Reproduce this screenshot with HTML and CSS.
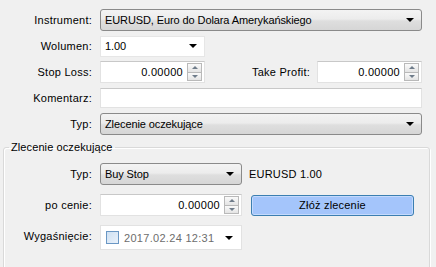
FILE: index.html
```html
<!DOCTYPE html>
<html lang="pl">
	<head>
		<meta charset="UTF-8" />
		<title>Zlecenie</title>
		<link rel="stylesheet" href="styles.css">
	</head>
	<body>
		<div class="order">
			<div class="grid">
				<span class="lbl">Instrument:</span>
				<div class="combo combo-btn">EURUSD, Euro do Dolara Amerykańskiego<span class="arrow"></span></div>

				<span class="lbl">Wolumen:</span>
				<div class="cell"><div class="combo combo-edit short">1.00<span class="arrow"></span></div></div>

				<span class="lbl">Stop Loss:</span>
				<div class="cell">
					<div class="spin short"><span class="val">0.00000</span><span class="spinner"><i class="up"></i><i class="down"></i></span></div>
					<span class="lbl tp-lbl">Take Profit:</span>
					<div class="spin tp"><span class="val">0.00000</span><span class="spinner"><i class="up"></i><i class="down"></i></span></div>
				</div>

				<span class="lbl">Komentarz:</span>
				<div class="cell"><div class="field"></div></div>

				<span class="lbl">Typ:</span>
				<div class="combo combo-btn">Zlecenie oczekujące<span class="arrow"></span></div>
			</div>

			<fieldset class="group">
				<legend>Zlecenie oczekujące</legend>
				<div class="grid inner">
					<span class="lbl">Typ:</span>
					<div class="cell">
						<div class="combo combo-btn mid">Buy Stop<span class="arrow"></span></div>
						<span class="info">EURUSD 1.00</span>
					</div>

					<span class="lbl">po cenie:</span>
					<div class="cell">
						<div class="spin mid"><span class="val">0.00000</span><span class="spinner"><i class="up"></i><i class="down"></i></span></div>
						<button class="place">Złóż zlecenie</button>
					</div>

					<span class="lbl">Wygaśnięcie:</span>
					<div class="cell">
						<div class="date mid">
							<span class="check"></span>
							<span class="date-val">2017.02.24 12:31</span>
							<span class="arrow"></span>
						</div>
					</div>
				</div>
			</fieldset>
		</div>
	</body>
</html>
```

FILE: styles.css
```css
body {
	margin: 0;
	background-color: #f0f0f0;
	font-family: "Liberation Sans", Arial, sans-serif;
	font-size: 11px;
	color: #000;
	overflow: hidden;
}

.order {
	padding-top: 9px;
	width: 436px;
	height: 267px;
	box-sizing: border-box;
	overflow: hidden;
}

.grid {
	display: grid;
	grid-template-columns: 92px 322px;
	grid-auto-rows: 22px;
	column-gap: 8px;
	row-gap: 4px;
}

.lbl {
	text-align: right;
	align-self: center;
	white-space: nowrap;
	letter-spacing: 0.25px;
}

.cell {
	display: flex;
	align-items: center;
}

.combo {
	position: relative;
	display: flex;
	align-items: center;
	box-sizing: border-box;
	height: 22px;
	padding-left: 4px;
	letter-spacing: -0.1px;
}

.combo-btn {
	border: 1px solid #8a8a8a;
	border-radius: 3px;
	background: linear-gradient(#f3f3f3, #ececec 45%, #dedede 55%, #d6d6d6);
}

.combo-edit {
	height: 21px;
	background-color: #fff;
	border: 1px solid #e6e6e6;
}

.arrow {
	position: absolute;
	right: 7px;
	top: 50%;
	margin-top: -2px;
	width: 0;
	height: 0;
	border-left: 4px solid transparent;
	border-right: 4px solid transparent;
	border-top: 4px solid #000;
}

.short {
	width: 105px;
}

.mid {
	width: 142px;
}

.spin {
	display: flex;
	align-items: center;
	box-sizing: border-box;
	height: 22px;
	background-color: #fff;
	border: 1px solid #e2e2e2;
	border-top-color: #c8c8c8;
}

.spin .val {
	flex: 1;
	text-align: right;
	padding-right: 4px;
	letter-spacing: 0.3px;
}

.spinner {
	display: flex;
	flex-direction: column;
	width: 15px;
	height: 18px;
	margin-right: 2px;
}

.spinner i {
	flex: 1;
	position: relative;
	border: 1px solid #b9b9b9;
	background: linear-gradient(#fafafa, #e4e4e4);
}

.spinner i + i {
	border-top: none;
}

.spinner i::after {
	content: "";
	position: absolute;
	left: 50%;
	top: 50%;
	margin-left: -3px;
	border-left: 3px solid transparent;
	border-right: 3px solid transparent;
}

.spinner .up::after {
	margin-top: -2px;
	border-bottom: 3px solid #6f7c8a;
}

.spinner .down::after {
	margin-top: -1px;
	border-top: 3px solid #6f7c8a;
}

.tp-lbl {
	margin-left: auto;
	margin-right: 7px;
}

.tp {
	width: 105px;
}

.field {
	width: 322px;
	height: 20px;
	box-sizing: border-box;
	background-color: #fff;
	border: 1px solid #e2e2e2;
	border-top-color: #c8c8c8;
}

.group {
	margin: 6px 6px 0 3px;
	padding: 10px 0 0 0;
	border: 1px solid #d9d9d9;
	border-radius: 3px;
	box-shadow: 1px 1px 0 #fff, inset 1px 1px 0 #fff;
	height: 130px;
	box-sizing: border-box;
}

.group legend {
	margin-left: 5px;
	padding: 0 2px;
	letter-spacing: 0.1px;
}

.inner {
	grid-template-columns: 88px 320px;
	row-gap: 9px;
}

.info {
	margin-left: 7px;
	letter-spacing: 0.2px;
}

.place {
	margin-left: 9px;
	width: 163px;
	height: 21px;
	font-family: inherit;
	font-size: 11px;
	letter-spacing: 0.2px;
	color: #000;
	background-color: #a4c5fb;
	border: 1px solid #3c7fb1;
	border-radius: 3px;
	box-shadow: inset 0 0 0 1px #c4dafd;
	padding: 0;
}

.date {
	position: relative;
	display: flex;
	align-items: center;
	box-sizing: border-box;
	height: 25px;
	margin-top: 3px;
	background-color: #fff;
	border: 1px solid #e2e2e2;
	padding-left: 5px;
}

.check {
	width: 11px;
	height: 11px;
	border: 1px solid #6a97c4;
	background: linear-gradient(135deg, #cfe1f3, #e9f1fa);
	margin-right: 5px;
}

.date-val {
	color: #6d6d6d;
	letter-spacing: 0.3px;
}

.date .arrow {
	right: 8px;
}
```
